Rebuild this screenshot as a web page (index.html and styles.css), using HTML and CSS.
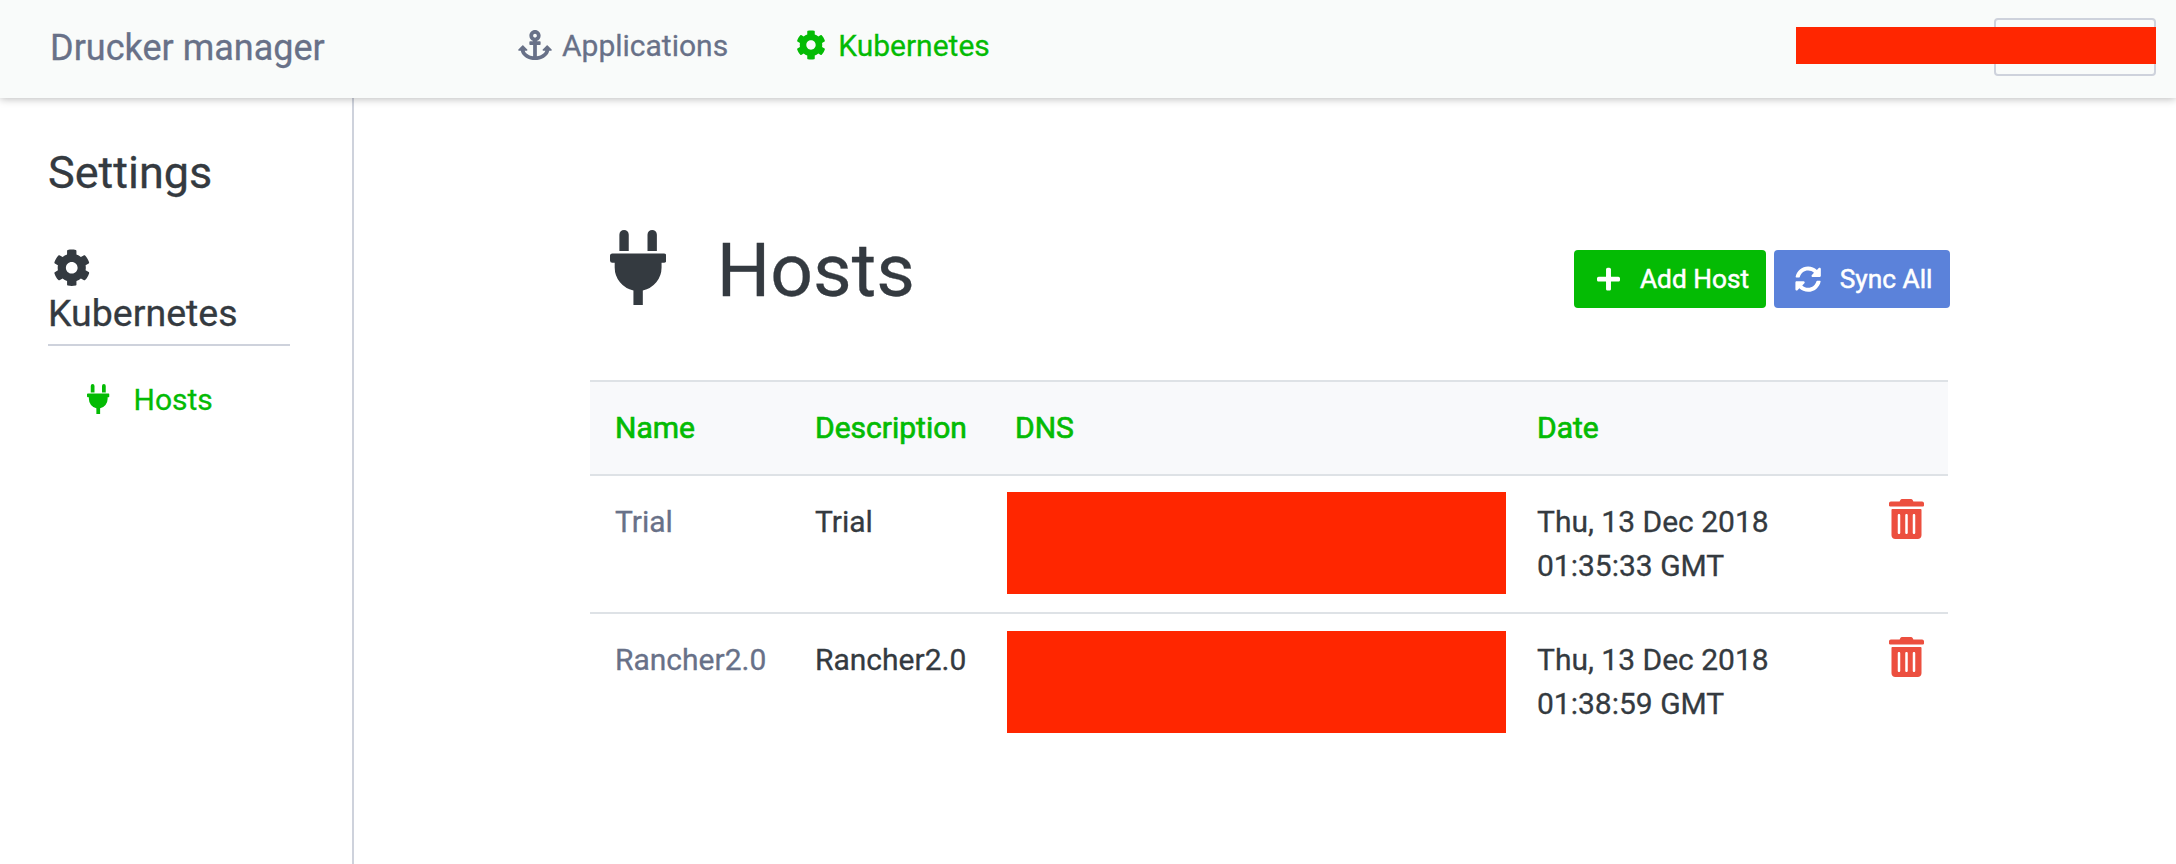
FILE: index.html
```html
<!DOCTYPE html>
<html lang="en">
<head>
<meta charset="utf-8">
<title>Drucker manager</title>
<link rel="stylesheet" href="styles.css">
</head>
<body>
<svg class="sprite" aria-hidden="true">
  <symbol id="anchor" viewBox="0 0 576 512"><path d="M12.971 352h32.394C67.172 454.735 181.944 512 288 512c106.229 0 220.853-57.38 242.635-160h32.394c10.691 0 16.045-12.926 8.485-20.485l-67.029-67.029c-4.686-4.686-12.284-4.686-16.971 0l-67.029 67.029c-7.56 7.56-2.206 20.485 8.485 20.485h35.146c-20.29 54.317-84.963 86.588-144.117 94.015V256h52c6.627 0 12-5.373 12-12v-40c0-6.627-5.373-12-12-12h-52v-5.47c37.281-13.226 63.995-48.764 63.995-90.53C384 43.011 340.989 0 287.998 0 235 0 192 43.011 192 96c0 41.766 26.714 77.304 64 90.53V192h-52c-6.627 0-12 5.373-12 12v40c0 6.627 5.373 12 12 12h52v190.015c-58.936-7.399-123.82-39.679-144.117-94.015h35.146c10.691 0 16.045-12.926 8.485-20.485l-67.029-67.029c-4.686-4.686-12.284-4.686-16.971 0L4.485 331.515C-3.074 339.074 2.28 352 12.971 352zM288 64c17.645 0 32 14.355 32 32s-14.355 32-32 32-32-14.355-32-32 14.355-32 32-32z"/></symbol>
  <symbol id="cog" viewBox="0 0 512 512"><path d="M487.4 315.7l-42.6-24.6c4.3-23.2 4.3-47 0-70.2l42.6-24.6c4.9-2.8 7.1-8.6 5.5-14-11.1-35.6-30-67.8-54.7-94.6-3.8-4.1-10-5.1-14.8-2.3L380.8 110c-17.9-15.4-38.5-27.3-60.8-35.1V25.8c0-5.6-3.9-10.5-9.4-11.7-36.7-8.2-74.3-7.8-109.2 0-5.5 1.2-9.4 6.1-9.4 11.7V75c-22.2 7.9-42.8 19.8-60.8 35.1L88.7 85.5c-4.9-2.8-11-1.9-14.8 2.3-24.7 26.7-43.6 58.9-54.7 94.6-1.7 5.4.6 11.2 5.5 14L67.3 221c-4.3 23.2-4.3 47 0 70.2l-42.6 24.6c-4.9 2.8-7.1 8.6-5.5 14 11.1 35.6 30 67.8 54.7 94.6 3.8 4.1 10 5.1 14.8 2.3l42.6-24.6c17.9 15.4 38.5 27.3 60.8 35.1v49.2c0 5.6 3.9 10.5 9.4 11.7 36.7 8.2 74.3 7.8 109.2 0 5.5-1.2 9.4-6.1 9.4-11.7v-49.2c22.2-7.9 42.8-19.8 60.8-35.1l42.6 24.6c4.9 2.8 11 1.9 14.8-2.3 24.7-26.7 43.6-58.9 54.7-94.6 1.5-5.5-.7-11.3-5.6-14.1zM256 336c-44.1 0-80-35.9-80-80s35.9-80 80-80 80 35.9 80 80-35.9 80-80 80z"/></symbol>
  <symbol id="plug" viewBox="0 0 384 512"><path d="M320 32a32 32 0 0 0-64 0v112h64zm48 128H16A16 16 0 0 0 0 176v32a16 16 0 0 0 16 16h16v32a160.07 160.07 0 0 0 128 156.8V512h64v-99.2A160.07 160.07 0 0 0 352 256v-32h16a16 16 0 0 0 16-16v-32a16 16 0 0 0-16-16zM128 32a32 32 0 0 0-64 0v112h64z"/></symbol>
  <symbol id="plus" viewBox="0 0 448 512"><path d="M416 208H272V64c0-17.67-14.33-32-32-32h-32c-17.67 0-32 14.33-32 32v144H32c-17.67 0-32 14.33-32 32v32c0 17.67 14.33 32 32 32h144v144c0 17.67 14.33 32 32 32h32c17.67 0 32-14.33 32-32V304h144c17.67 0 32-14.33 32-32v-32c0-17.67-14.33-32-32-32z"/></symbol>
  <symbol id="sync" viewBox="0 0 512 512"><path d="M370.72 133.28C339.458 104.008 298.888 87.962 255.848 88c-77.458.068-144.328 53.178-162.791 126.85-1.344 5.363-6.122 9.15-11.651 9.15H24.103c-7.498 0-13.194-6.807-11.807-14.176C33.933 94.924 134.813 8 256 8c66.448 0 126.791 26.136 171.315 68.685L463.03 40.97C478.149 25.851 504 36.559 504 57.941V192c0 13.255-10.745 24-24 24H345.941c-21.382 0-32.09-25.851-16.971-40.971l41.75-41.749zM32 296h134.059c21.382 0 32.09 25.851 16.971 40.971l-41.75 41.75c31.262 29.273 71.835 45.319 114.876 45.28 77.418-.07 144.315-53.144 162.787-126.849 1.344-5.363 6.122-9.15 11.651-9.15h57.304c7.498 0 13.194 6.807 11.807 14.176C478.067 417.076 377.187 504 256 504c-66.448 0-126.791-26.136-171.315-68.685L48.97 471.03C33.851 486.149 8 475.441 8 454.059V320c0-13.255 10.745-24 24-24z"/></symbol>
  <symbol id="trash" viewBox="0 0 448 512"><path d="M0 84V56c0-13.3 10.7-24 24-24h112l9.4-18.7c4-8.2 12.3-13.3 21.4-13.3h114.3c9.1 0 17.4 5.1 21.5 13.3L312 32h112c13.3 0 24 10.7 24 24v28c0 6.6-5.4 12-12 12H12C5.4 96 0 90.6 0 84zm416 56v324c0 26.500-21.500 48-48 48H80c-26.500 0-48-21.500-48-48V140c0-6.600 5.400-12 12-12h360c6.600 0 12 5.400 12 12zm-272 68c0-8.800-7.200-16-16-16s-16 7.200-16 16v224c0 8.800 7.200 16 16 16s16-7.200 16-16V208zm96 0c0-8.800-7.200-16-16-16s-16 7.200-16 16v224c0 8.800 7.200 16 16 16s16-7.200 16-16V208zm96 0c0-8.800-7.200-16-16-16s-16 7.200-16 16v224c0 8.800 7.200 16 16 16s16-7.200 16-16V208z"/></symbol>
</svg>

<header class="topbar">
  <a class="brand">Drucker manager</a>
  <nav class="nav">
    <a class="nav-link"><svg class="icon icon-anchor"><use href="#anchor"/></svg>Applications</a>
    <a class="nav-link active"><svg class="icon icon-cog"><use href="#cog"/></svg>Kubernetes</a>
  </nav>
  <div class="account">
    <div class="account-button"></div>
    <div class="account-mask"></div>
  </div>
</header>

<div class="layout">
  <aside class="sidebar">
    <h2 class="side-title">Settings</h2>
    <div class="side-group">
      <svg class="icon side-cog"><use href="#cog"/></svg>
      <span class="side-name">Kubernetes</span>
    </div>
    <a class="side-link"><svg class="icon side-plug"><use href="#plug"/></svg>Hosts</a>
  </aside>

  <main class="main">
    <div class="page-head">
      <h1 class="page-title"><svg class="icon title-plug"><use href="#plug"/></svg>Hosts</h1>
      <div class="actions">
        <button class="btn btn-add"><svg class="icon icon-plus"><use href="#plus"/></svg>Add Host</button>
        <button class="btn btn-sync"><svg class="icon icon-sync"><use href="#sync"/></svg>Sync All</button>
      </div>
    </div>

    <div class="table">
      <div class="row row-head">
        <div class="cell">Name</div>
        <div class="cell">Description</div>
        <div class="cell">DNS</div>
        <div class="cell">Date</div>
        <div class="cell"></div>
      </div>
      <div class="row">
        <div class="cell link">Trial</div>
        <div class="cell">Trial</div>
        <div class="cell-mask"><div class="mask"></div></div>
        <div class="cell">Thu, 13 Dec 2018<br>01:35:33 GMT</div>
        <div class="cell cell-trash"><svg class="icon icon-trash"><use href="#trash"/></svg></div>
      </div>
      <div class="row">
        <div class="cell link">Rancher2.0</div>
        <div class="cell">Rancher2.0</div>
        <div class="cell-mask cell-mask-last"><div class="mask"></div></div>
        <div class="cell">Thu, 13 Dec 2018<br>01:38:59 GMT</div>
        <div class="cell cell-trash"><svg class="icon icon-trash"><use href="#trash"/></svg></div>
      </div>
    </div>
  </main>
</div>
</body>
</html>
```

FILE: styles.css
```css
* { box-sizing: border-box; }

body {
  margin: 0;
  height: 864px;
  overflow: hidden;
  display: flex;
  flex-direction: column;
  background: #fff;
  color: #343a40;
  font: 400 30px/44px Roboto, "Liberation Sans", sans-serif;
  -webkit-text-stroke: .3px currentColor;
}

.sprite { position: absolute; width: 0; height: 0; }
.icon { display: block; flex: none; fill: currentColor; }

/* Top bar */
.topbar {
  position: relative;
  z-index: 1;
  flex: none;
  display: flex;
  align-items: flex-start;
  height: 98px;
  padding: 0 20px 0 50px;
  background: #f9fbfa;
  color: #687188;
  box-shadow: 0 1px 8px rgba(0, 0, 0, .27);
}
.brand { width: 468px; padding-top: 26px; font-size: 36px; }
.nav { display: flex; gap: 68px; padding-top: 24px; }
.nav-link { display: flex; }
.nav-link .icon { margin-top: 6px; }
.icon-anchor { width: 34px; height: 30px; margin-right: 10px; }
.icon-cog { width: 30px; height: 30px; margin-right: 12px; }
.active { color: #04bb04; }

.account {
  position: relative;
  display: flex;
  justify-content: flex-end;
  width: 361px;
  margin: 18px 0 0 auto;
}
.account-button {
  width: 162px;
  height: 58px;
  border: 2px solid #ced2dc;
  border-radius: 4px;
}
.account-mask {
  position: absolute;
  top: 9px;
  left: .5px;
  width: 360px;
  height: 36.500px;
  background: #ff2600;
}

/* Sidebar */
.layout { flex: 1; display: flex; }
.sidebar {
  width: 354px;
  padding: 48px 62px 0 48px;
  border-right: 2px solid #ced2dc;
}
.side-title { margin: 0; font-size: 45px; line-height: 54px; font-weight: 400; }
.side-group {
  margin-top: 49px;
  padding-bottom: 8px;
  border-bottom: 2px solid #ced2dc;
  font-size: 37.500px;
}
.side-cog { width: 37.500px; height: 37.500px; margin-left: 5px; }
.side-name { display: block; margin-top: 4px; line-height: 45px; }
.side-link { display: flex; margin: 32px 0 0 39px; color: #04bb04; }
.side-plug { width: 22.500px; height: 30px; margin: 6px 24px 0 0; }

/* Page content */
.main { width: 1360px; margin-left: 236px; padding-top: 124px; }
.page-head { display: flex; justify-content: space-between; height: 158px; }
.page-title {
  display: flex;
  margin: 0;
  padding: 2px 0 0 20px;
  font-size: 75px;
  line-height: 92px;
  font-weight: 400;
}
.title-plug { width: 56.250px; height: 75px; margin: 6px 50.500px 0 0; }
.actions { display: flex; gap: 8px; padding-top: 28px; }
.btn {
  display: flex;
  align-items: center;
  height: 58px;
  padding: 0;
  border: 0;
  border-radius: 4px;
  color: #fff;
  font: 400 26.250px/40px Roboto, "Liberation Sans", sans-serif;
  -webkit-text-stroke: .5px currentColor;
}
.btn .icon { stroke: none; }
.btn-add { width: 192px; padding-left: 22.500px; background: #04bb04; }
.btn-sync { width: 176px; padding-left: 21px; background: #5b82da; }
.icon-plus { width: 23px; height: 26.250px; margin-right: 20.500px; }
.icon-sync { width: 26.250px; height: 26.250px; margin-right: 18.500px; }

/* Hosts table */
.table { width: 1358px; }
.row {
  display: grid;
  grid-template-columns: 200px 200px 522px 353px 83px;
  border-top: 2px solid #dee2e6;
  height: 138px;
}
.row-head {
  height: 94px;
  background: #f8f9fb;
  color: #04bb04;
  -webkit-text-stroke: .7px currentColor;
}
.cell { padding: 24px 23px 24px 25px; }
.link { color: #687188; }
.cell-trash { padding: 23px 24px; color: #ec4f3f; }
.icon-trash { width: 35px; height: 40px; }
.cell-mask { padding: 15.500px 6.500px 0 16.500px; }
.cell-mask-last { padding-top: 16.500px; }
.mask { height: 102px; background: #ff2600; }
```
